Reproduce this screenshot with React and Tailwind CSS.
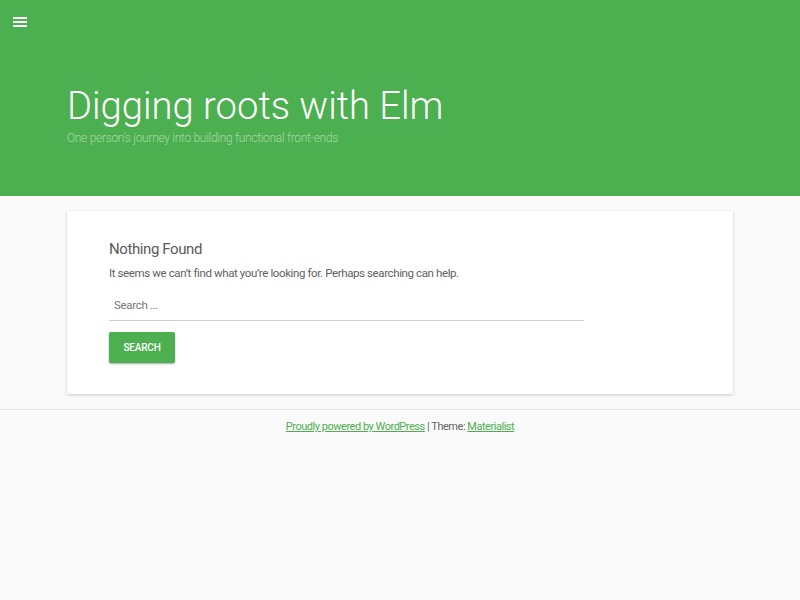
export default function App() {
  return (
    <div className="min-h-[600px] bg-[#fafafa] font-['Roboto',sans-serif]">
      <header className="h-[196px] bg-[#4caf50] relative">
        <div className="pt-[16px] pl-[13px]">
          <svg width="14" height="11" viewBox="0 0 14 11" className="block">
            <rect x="0" y="1" width="14" height="2" fill="#fff" />
            <rect x="0" y="5" width="14" height="2" fill="#fff" />
            <rect x="0" y="9" width="14" height="2" fill="#fff" />
          </svg>
        </div>
        <div className="pl-[67px] pt-[55px]">
          <h1 className="text-[38.2px] leading-[48px] font-light text-white">Digging roots with Elm</h1>
          <p className="text-[12px] leading-[16px] font-light text-white/50 tracking-[-0.3px]">One person's journey into building functional front-ends</p>
        </div>
      </header>
      <main className="px-[67px] pt-[15px] pb-[15px]">
        <div className="bg-white shadow-[0_1px_3px_rgba(0,0,0,0.2)] pl-[42px] pr-[149px] pt-[28px] pb-[31px]">
          <h2 className="text-[15px] leading-[20px] text-[#5a5a5a] tracking-[-0.4px]">Nothing Found</h2>
          <p className="text-[11.5px] leading-[16px] text-[#616161] mt-[6px] tracking-[-0.39px]">It seems we can’t find what you’re looking for. Perhaps searching can help.</p>
          <div className="mt-[10px] border-b border-[#d0d0d0] h-[30px] flex items-center">
            <span className="text-[11.5px] text-[#757575] pl-[5px] tracking-[-0.3px]">Search …</span>
          </div>
          <button className="mt-[11px] w-[66px] h-[31px] bg-[#4caf50] text-white text-[10px] font-medium rounded-[2px] shadow-[0_1px_2px_rgba(0,0,0,0.35)] uppercase tracking-[-0.2px]">Search</button>
        </div>
      </main>
      <footer className="border-t border-[#e5e5e5] pt-[9px] text-center text-[11px] text-[#666] tracking-[-0.47px]">
        <a className="text-[#4caf50] underline">Proudly powered by WordPress</a> | Theme: <a className="text-[#4caf50] underline">Materialist</a>
      </footer>
    </div>
  );
}
